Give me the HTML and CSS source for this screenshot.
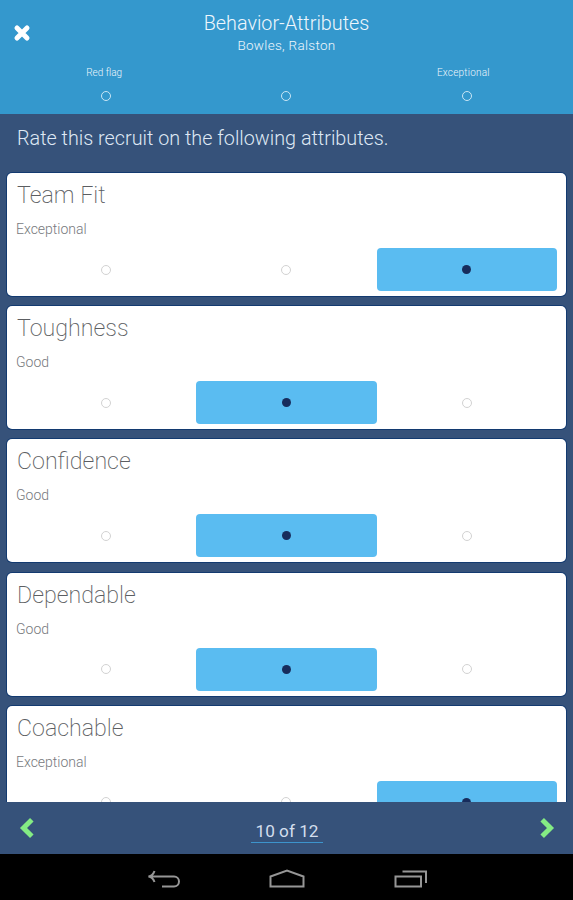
FILE: index.html
```html
<!DOCTYPE html>
<html lang="en">
<head>
  <meta charset="UTF-8">
  <meta name="viewport" content="width=device-width, initial-scale=1.0">
  <title>Behavior-Attributes</title>
  <link rel="stylesheet" href="styles.css">
</head>
<body>
  <header class="header">
    <div class="title-bar">
      <button class="icon-btn close" aria-label="Close">
        <svg width="18" height="18" viewBox="0 0 18 18"><path d="M4 4L14 14M14 4L4 14"/></svg>
      </button>
      <div class="titles">
        <h1>Behavior-Attributes</h1>
        <p>Bowles, Ralston</p>
      </div>
    </div>
    <div class="scale">
      <div class="scale-item"><span class="low">Red flag</span><i class="dot"></i></div>
      <div class="scale-item"><span></span><i class="dot"></i></div>
      <div class="scale-item"><span class="high">Exceptional</span><i class="dot"></i></div>
    </div>
  </header>

  <main class="content">
    <p class="intro">Rate this recruit on the following attributes.</p>
    <div class="card-list">
      <section class="card">
        <h2>Team Fit</h2>
        <p class="rating">Exceptional</p>
        <div class="options">
          <div class="option"><i class="dot"></i></div>
          <div class="option"><i class="dot"></i></div>
          <div class="option selected"><i class="dot"></i></div>
        </div>
      </section>
      <section class="card">
        <h2>Toughness</h2>
        <p class="rating">Good</p>
        <div class="options">
          <div class="option"><i class="dot"></i></div>
          <div class="option selected"><i class="dot"></i></div>
          <div class="option"><i class="dot"></i></div>
        </div>
      </section>
      <section class="card">
        <h2>Confidence</h2>
        <p class="rating">Good</p>
        <div class="options">
          <div class="option"><i class="dot"></i></div>
          <div class="option selected"><i class="dot"></i></div>
          <div class="option"><i class="dot"></i></div>
        </div>
      </section>
      <section class="card">
        <h2>Dependable</h2>
        <p class="rating">Good</p>
        <div class="options">
          <div class="option"><i class="dot"></i></div>
          <div class="option selected"><i class="dot"></i></div>
          <div class="option"><i class="dot"></i></div>
        </div>
      </section>
      <section class="card">
        <h2>Coachable</h2>
        <p class="rating">Exceptional</p>
        <div class="options">
          <div class="option"><i class="dot"></i></div>
          <div class="option"><i class="dot"></i></div>
          <div class="option selected"><i class="dot"></i></div>
        </div>
      </section>
    </div>
  </main>

  <footer class="pager">
    <button class="icon-btn arrow" aria-label="Previous">
      <svg width="16" height="22" viewBox="0 0 16 22"><path d="M12.800 2.700L4.500 11L12.800 19.300"/></svg>
    </button>
    <span class="page">10 of 12</span>
    <button class="icon-btn arrow" aria-label="Next">
      <svg width="16" height="22" viewBox="0 0 16 22"><path d="M3.200 2.700L11.500 11L3.200 19.300"/></svg>
    </button>
  </footer>

  <!-- Android system buttons -->
  <nav class="system-bar">
    <svg width="34" height="20" viewBox="0 0 34 20"><path d="M7.500 2C6.500 5 4.500 7 1.500 7.500C4.500 8 6.500 10 7.500 13M2 7.500H27A5 5 0 0 1 27 17.500H15"/></svg>
    <svg width="36" height="20" viewBox="0 0 36 20"><path d="M1.500 17.500V7.500L18 1.500L34.500 7.500V17.500Z"/></svg>
    <svg width="34" height="20" viewBox="0 0 34 20"><path d="M2.500 7.500H28V17.500H2.500ZM9.500 2.500H33V14"/></svg>
  </nav>
</body>
</html>
```
FILE: styles.css
```css
* {
  box-sizing: border-box;
}

body {
  margin: 0;
  height: 100vh;
  display: flex;
  flex-direction: column;
  overflow: hidden;
  font-family: Roboto, sans-serif;
  font-weight: 300;
  background-color: #36527a;
  color: #eef6fc;
}

h1, h2, p {
  margin: 0;
  font-weight: 300;
}

svg {
  display: block;
  fill: none;
}

.icon-btn {
  padding: 0;
  border: none;
  background: none;
}

.header {
  flex: none;
  height: 114px;
  background-color: #3498cd;
}

.title-bar {
  display: grid;
  grid-template-columns: 60px 1fr 60px;
  height: 66px;
}

.close {
  align-self: center;
  padding-left: 13px;
}

.close path {
  stroke: white;
  stroke-width: 5;
  stroke-linecap: round;
}

.titles {
  padding-top: 12px;
  text-align: center;
}

.titles h1 {
  font-size: 19.8px;
  line-height: 24px;
}

.titles p {
  font-size: 13.5px;
  line-height: 18px;
  letter-spacing: 0.3px;
}

.scale,
.options {
  display: grid;
  grid-template-columns: repeat(3, 1fr);
}

.scale {
  padding: 0 16px;
}

.scale-item {
  display: flex;
  flex-direction: column;
  align-items: center;
  font-size: 10px;
}

.scale-item span {
  height: 14px;
  margin-bottom: 11px;
  line-height: 14px;
}

.scale-item .low {
  margin-right: 4px;
}

.scale-item .high {
  margin-right: 7px;
  letter-spacing: 0.2px;
}

.dot {
  width: 10px;
  height: 10px;
  border: 1.5px solid #c9e6f5;
  border-radius: 50%;
}

.content {
  flex: 1;
  min-height: 0;
  overflow: hidden;
}

.intro {
  height: 59.2px;
  padding: 13px 17px 0;
  font-size: 19.8px;
  line-height: 24px;
  color: #dfe8f4;
}

.card-list {
  display: flex;
  flex-direction: column;
  gap: 10.15px;
  padding: 0 7px;
}

.card {
  flex: none;
  height: 123px;
  padding: 8px 9px 0;
  border-radius: 5px;
  background-color: white;
  box-shadow: 0 0 0 1px #133a70;
  color: #5c5e62;
}

.card h2 {
  padding-left: 1px;
  font-size: 23.2px;
  font-weight: 200;
  line-height: 28px;
}

.rating {
  margin-top: 11px;
  font-size: 14px;
  line-height: 18px;
  color: #77797d;
}

.options {
  margin-top: 10px;
}

.option {
  display: flex;
  align-items: center;
  justify-content: center;
  height: 43px;
  border-radius: 4px;
}

.option .dot {
  border: 1px solid #d2d2d2;
}

.option.selected {
  background-color: #5abcf1;
}

.option.selected .dot {
  width: 9px;
  height: 9px;
  border: none;
  background-color: #172c5c;
}

.pager {
  flex: none;
  display: flex;
  align-items: center;
  justify-content: space-between;
  height: 52px;
  padding: 0 18px 0 19px;
}

.arrow path {
  stroke: #84ec84;
  stroke-width: 5;
}

.page {
  margin-top: 6px;
  padding: 0 5px;
  border-bottom: 1.5px solid #3d94cc;
  font-size: 17.2px;
  line-height: 22px;
  font-weight: 400;
  color: #d3deed;
}

.system-bar {
  flex: none;
  display: flex;
  align-items: center;
  justify-content: center;
  gap: 88px;
  height: 46px;
  padding-top: 3px;
  background-color: black;
}

.system-bar path {
  stroke: #969696;
  stroke-width: 2;
}
```
